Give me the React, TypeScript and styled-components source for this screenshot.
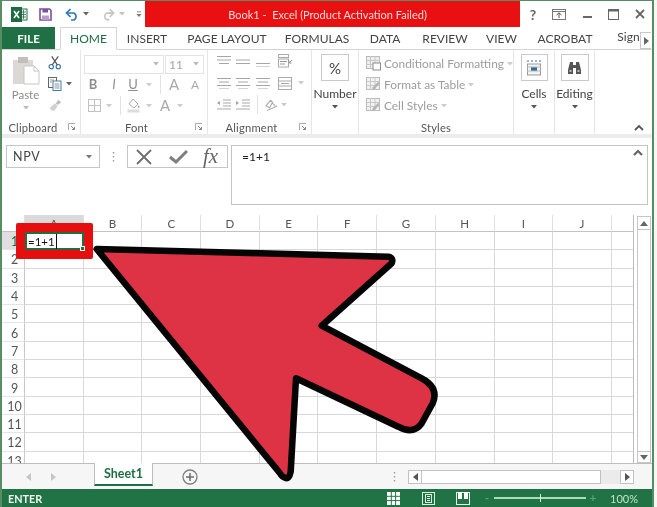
import React from "react";
import styled, { createGlobalStyle } from "styled-components";

const Global = createGlobalStyle`
  html, body { margin: 0; padding: 0; background: #fff; overflow: hidden; }
  * { box-sizing: border-box; }
`;

const Page = styled.div`
  position: relative;
  width: 657px;
  height: 507px;
  padding-right: 3px;
  background: #f4f7f4;
  overflow: hidden;
  font-family: "Lato", "Open Sans", "Liberation Sans", sans-serif;
  filter: blur(0.35px);
`;
const Win = styled.div`
  display: flex;
  flex-direction: column;
  width: 654px;
  height: 507px;
  background: #fff;
  border-left: 2px solid #578c64;
  border-right: 2px solid #578c64;
  border-top: 1px solid #578c64;
`;

/* Title bar */
const TitleBar = styled.div`
  display: flex;
  height: 26px;
  flex: none;
`;
const Qat = styled.div`
  display: flex;
  align-items: center;
  width: 143px;
  padding-left: 7px;
`;
const Slot = styled.div<{ $w: number; $ml?: number }>`
  display: flex;
  align-items: center;
  justify-content: center;
  flex: none;
  width: ${(p) => p.$w}px;
  margin-left: ${(p) => p.$ml ?? 0}px;
`;
const RedTitle = styled.div`
  width: 375px;
  display: flex;
  align-items: center;
  justify-content: center;
  padding-right: 10px;
  background: #e81010;
  color: #fbdcdc;
  font-size: 11px;
  white-space: pre;
`;
const WinControls = styled.div`
  display: flex;
  align-items: center;
  flex: 1;
`;
const Help = styled.span`
  color: #666;
  font-weight: 700;
  font-size: 14px;
`;

/* Tabs */
const TabRow = styled.div`
  display: flex;
  height: 23px;
  flex: none;
  align-items: stretch;
  border-bottom: 1px solid #d4d4d4;
`;
const FileTab = styled.div`
  width: 53px;
  background: #1f7044;
  color: #fff;
  font-size: 11.5px;
  font-weight: 700;
  display: flex;
  align-items: center;
  justify-content: center;
`;
const Tab = styled.div<{ $w: number; $ml: number; $active?: boolean }>`
  width: ${(p) => p.$w}px;
  margin-left: ${(p) => p.$ml}px;
  flex: none;
  display: flex;
  align-items: center;
  justify-content: center;
  font-size: 12px;
  color: ${(p) => (p.$active ? "#1f6e43" : "#444")};
  white-space: nowrap;
  background: #fff;
  border: ${(p) => (p.$active ? "1px solid #d4d4d4" : "none")};
  border-bottom: ${(p) => (p.$active ? "1px solid #fff" : "none")};
  height: ${(p) => (p.$active ? "23px" : "22px")};
`;
const SignWrap = styled.div`
  font-size: 12px;
  color: #444;
  line-height: 18px;
  margin-bottom: 3px;
`;
const MoreBtn = styled.div`
  width: 11px;
  height: 17px;
  margin-top: 5px;
  border: 1px solid #c8c8c8;
  border-right: none;
  display: flex;
  align-items: center;
  justify-content: center;
`;

/* Ribbon */
const Ribbon = styled.div`
  display: flex;
  height: 84px;
  flex: none;
`;
const Group = styled.div<{ $w: number }>`
  width: ${(p) => p.$w}px;
  flex: none;
  display: flex;
  flex-direction: column;
  border-right: 1px solid #e6e6e6;
  position: relative;
`;
const GroupBody = styled.div<{ $pt?: number }>`
  flex: 1;
  padding-top: ${(p) => p.$pt ?? 0}px;
  min-height: 0;
`;
const GroupLabel = styled.div<{ $pr?: number }>`
  height: 18px;
  padding: 4px ${(p) => p.$pr ?? 0}px 0 0;
  display: flex;
  align-items: center;
  justify-content: center;
  font-size: 11.2px;
  color: #555;
  letter-spacing: 0.2px;
`;
const Launcher = styled.div`
  position: absolute;
  right: 4px;
  bottom: 3px;
  display: flex;
`;
const ToolRow = styled.div<{ $h?: number }>`
  display: flex;
  align-items: center;
  height: ${(p) => p.$h ?? 21}px;
`;
const ClipWrap = styled.div`
  display: flex;
  height: 100%;
`;
const PasteCol = styled.div`
  width: 46px;
  display: flex;
  flex-direction: column;
  align-items: center;
  padding: 6px 0 0 1px;
`;
const PasteText = styled.div`
  font-size: 11.5px;
  color: #8c8c8c;
  margin-top: 2px;
  line-height: 16px;
`;
const ClipTools = styled.div`
  padding-top: 2px;
  width: 30px;
`;
const InputBox = styled.div<{ $w: number; $ml: number }>`
  width: ${(p) => p.$w}px;
  margin-left: ${(p) => p.$ml}px;
  height: 19px;
  border: 1px solid #e2e2e2;
  display: flex;
  align-items: center;
  justify-content: space-between;
  padding: 0 4px 0 3px;
  font-size: 12px;
  color: #a5a5a5;
  flex: none;
`;
const Glyph = styled.span<{ $size?: number; $bold?: boolean; $color?: string; $italic?: boolean; $u?: boolean }>`
  font-size: ${(p) => p.$size ?? 12}px;
  font-weight: ${(p) => (p.$bold ? 700 : 400)};
  font-style: ${(p) => (p.$italic ? "italic" : "normal")};
  text-decoration: ${(p) => (p.$u ? "underline" : "none")};
  color: ${(p) => p.$color ?? "#8e8e8e"};
  line-height: 1;
`;
const VLine = styled.div`
  width: 1px;
  height: 19px;
  background: #e2e2e2;
`;
const BigCol = styled.div`
  display: flex;
  flex-direction: column;
  align-items: center;
  padding-top: 4px;
`;
const BigBox = styled.div<{ $w: number }>`
  width: ${(p) => p.$w}px;
  height: 27px;
  border: 1px solid #c9c9c9;
  display: flex;
  align-items: center;
  justify-content: center;
  color: #444;
  font-size: 15px;
`;
const BigText = styled.div`
  font-size: 12px;
  color: #444;
  line-height: 16px;
  margin-top: 5px;
  white-space: nowrap;
`;
const BigCaret = styled.div`
  display: flex;
  margin-top: 3px;
`;
const StyleRow = styled.div`
  display: flex;
  align-items: center;
  height: 21px;
  padding-left: 7px;
  gap: 3px;
  font-size: 11.9px;
  color: #9d9d9d;
  white-space: nowrap;
`;
const RibbonEnd = styled.div`
  flex: 1;
  display: flex;
  align-items: flex-end;
  justify-content: flex-end;
  padding: 0 8px 3px 0;
`;
const Strip = styled.div`
  height: 4px;
  flex: none;
  background: #ececec;
`;

/* Formula bar */
const FormulaArea = styled.div`
  display: flex;
  height: 77px;
  flex: none;
  padding: 7px 4px 10px 4px;
  align-items: flex-start;
`;
const NameBox = styled.div`
  width: 94px;
  height: 23px;
  border: 1px solid #c6c6c6;
  display: flex;
  align-items: center;
  justify-content: space-between;
  padding: 0 7px 0 6px;
  font-size: 12.5px;
  letter-spacing: 0.6px;
  color: #444;
`;
const Dots = styled.div`
  width: 27px;
  height: 23px;
  display: flex;
  align-items: center;
  justify-content: center;
`;
const FxBox = styled.div`
  width: 101px;
  height: 23px;
  border: 1px solid #c6c6c6;
  display: flex;
  align-items: center;
  padding-left: 7px;
  gap: 15.5px;
`;
const Fx = styled.span`
  font-family: "Liberation Serif", serif;
  font-style: italic;
  font-size: 21px;
  color: #666;
  line-height: 1;
`;
const FormulaInput = styled.div`
  width: 417px;
  height: 60px;
  margin-left: 3px;
  border: 1px solid #c4c4c4;
  padding: 3px 4px 0 10px;
  font-size: 12px;
  color: #222;
  display: flex;
  justify-content: space-between;
  align-items: flex-start;
`;

/* Sheet */
const SheetArea = styled.div`
  display: flex;
  height: 248px;
  flex: none;
`;
const Grid = styled.div`
  width: 632px;
  height: 248px;
  display: grid;
  grid-template-columns: 23px repeat(10, 58.7px) 22px;
  grid-auto-rows: 18.3px;
  grid-template-rows: 17px;
  border-right: 1px solid #bdbdbd;
  overflow: hidden;
`;
const ColHead = styled.div<{ $on?: boolean }>`
  display: flex;
  align-items: center;
  justify-content: center;
  padding-top: 1px;
  font-size: 11.5px;
  color: #555;
  background: ${(p) => (p.$on ? "#dadada" : "#fff")};
  border-right: 1px solid #e0e0e0;
  border-bottom: 1px solid #c2c2c2;
`;
const RowHead = styled.div<{ $on?: boolean }>`
  display: flex;
  align-items: center;
  justify-content: center;
  padding: 2px 0 0 3px;
  font-size: 12.5px;
  color: ${(p) => (p.$on ? "#1f6e43" : "#555")};
  background: ${(p) => (p.$on ? "#dfdfdf" : "#fff")};
  border-right: 1px solid #c9c9c9;
  border-bottom: 1px solid #e4e4e4;
`;
const Cell = styled.div`
  border-right: 1px solid #d8d8d8;
  border-bottom: 1px solid #d8d8d8;
`;
const ActiveCell = styled.div`
  position: relative;
  z-index: 2;
  background: #fff;
  border: 2px solid #1f6e43;
  box-shadow: 0 0 0 9px #e60f0f;
  border-radius: 0.5px;
  display: flex;
  align-items: center;
  padding: 1px 0 0 1px;
  font-size: 11.5px;
  font-weight: 400;
  color: #111;
`;
const Caret = styled.span`
  display: inline-block;
  width: 1px;
  height: 15px;
  margin-left: 1px;
  background: #111;
`;
const Handle = styled.span`
  position: absolute;
  right: -3px;
  bottom: -3px;
  width: 5px;
  height: 5px;
  background: #1f6e43;
  border: 1px solid #fff;
`;
const VScroll = styled.div`
  width: 18px;
  padding: 1px 1px 0 3px;
  display: flex;
  flex-direction: column;
  height: 248px;
`;
const VBtn = styled.div<{ $h: number }>`
  height: ${(p) => p.$h}px;
  flex: none;
  border: 1px solid #c6c6c6;
  display: flex;
  align-items: center;
  justify-content: center;
`;
const VTrack = styled.div`
  flex: 1;
  border-left: 1px solid #c6c6c6;
  border-right: 1px solid #c6c6c6;
`;

/* Sheet bar */
const SheetBar = styled.div`
  height: 26px;
  flex: none;
  display: flex;
  align-items: flex-start;
  background: #f6f6f6;
  border-top: 1px solid #bdbdbd;
`;
const NavArrows = styled.div`
  width: 92px;
  height: 25px;
  padding-left: 24px;
  display: flex;
  align-items: center;
  gap: 20px;
`;
const SheetTab = styled.div`
  width: 59px;
  height: 23px;
  margin-top: -1px;
  background: #fff;
  border-left: 1px solid #bdbdbd;
  border-right: 1px solid #bdbdbd;
  border-bottom: 2px solid #1f6e43;
  color: #1f6e43;
  font-weight: 700;
  font-size: 12.5px;
  display: flex;
  align-items: center;
  justify-content: center;
`;
const AddWrap = styled.div`
  margin-left: 29px;
  height: 25px;
  width: 18px;
  display: flex;
  align-items: center;
`;
const SheetDots = styled.div`
  margin-left: 193px;
  height: 25px;
  width: 12px;
  display: flex;
  align-items: center;
`;
const HScroll = styled.div`
  margin: 6px 0 0 3px;
  width: 226px;
  height: 14px;
  display: flex;
`;
const HBtn = styled.div`
  width: 14px;
  flex: none;
  border: 1px solid #c2c2c2;
  background: #fff;
  display: flex;
  align-items: center;
  justify-content: center;
`;
const HThumb = styled.div`
  width: 179px;
  flex: none;
  background: #fff;
  border: 1px solid #c2c2c2;
  border-left: none;
`;
const HGap = styled.div`
  flex: 1;
  background: #ebebeb;
`;

/* Status */
const Status = styled.div`
  flex: 1;
  background: #217346;
  color: #f1f6f3;
  font-size: 10.8px;
  font-weight: 700;
  display: flex;
  align-items: center;
  padding-left: 6px;
`;
const StatusRight = styled.div`
  display: flex;
  align-items: center;
  margin-left: auto;
`;
const Zoom = styled.div`
  position: relative;
  width: 92px;
  height: 2px;
  margin: 0 3px 0 3px;
  background: #a9dcb9;
`;
const ZoomTick = styled.span`
  position: absolute;
  left: 46px;
  top: -3px;
  width: 1px;
  height: 8px;
  background: #d8f0e0;
`;
const PctText = styled.span`
  width: 25px;
  font-size: 11px;
  font-weight: 400;
  color: #bfe3cb;
  margin-left: 13px;
  margin-right: 17px;
  white-space: nowrap;
`;
const Pm = styled.span`
  color: #54a474;
  font-size: 12px;
  font-weight: 700;
  line-height: 1;
`;

/* Overlay arrow */
const ArrowSvg = styled.svg`
  position: absolute;
  left: 0;
  top: 0;
  z-index: 5;
  pointer-events: none;
`;

const Dn = ({ c = "#999" }: { c?: string }) => (
  <svg width="6" height="4" viewBox="0 0 6 4"><path d="M0 0h6L3 3.5z" fill={c} /></svg>
);
const ExcelLogo = () => (
  <svg width="17" height="15" viewBox="0 0 17 15">
    <rect x="8" y="2" width="8" height="11" fill="#fff" stroke="#1f6e43" />
    <path d="M10 5h5M10 7.5h5M10 10h5M12.5 3v9" stroke="#1f6e43" strokeWidth="0.8" />
    <rect x="0" y="0" width="11" height="15" fill="#1d6b40" />
    <path d="M3 4l5 7M8 4l-5 7" stroke="#fff" strokeWidth="1.6" />
  </svg>
);
const Save = () => (
  <svg width="13" height="13" viewBox="0 0 13 13">
    <path d="M1 1h9.5L12 2.5V12H1z" fill="#fff" stroke="#7d4f9e" strokeWidth="1.6" />
    <rect x="3.5" y="1" width="5.5" height="3.5" fill="#7d4f9e" />
    <rect x="3" y="7.5" width="7" height="4.5" fill="#b79ccb" />
  </svg>
);
const Undo = ({ c, flip }: { c: string; flip?: boolean }) => (
  <svg width="15" height="13" viewBox="0 0 15 13" style={flip ? { transform: "scaleX(-1)" } : undefined}>
    <path d="M2 5h7a4 4 0 0 1 0 7H6" fill="none" stroke={c} strokeWidth="1.7" />
    <path d="M5.5 1L1.5 5l4 4" fill="none" stroke={c} strokeWidth="1.7" />
  </svg>
);
const QatMore = () => (
  <svg width="7" height="8" viewBox="0 0 7 8"><path d="M1 1.5h5" stroke="#777" /><path d="M0.5 4h6L3.5 7.5z" fill="#777" /></svg>
);
const DisplayIcon = () => (
  <svg width="14" height="12" viewBox="0 0 14 12"><rect x="0.5" y="1.5" width="13" height="10" fill="none" stroke="#777" /><path d="M0.5 3.5h13" stroke="#777" /><path d="M7 5v5M4.5 7L7 4.8 9.5 7" fill="none" stroke="#555" /></svg>
);
const Lines = ({ w }: { w: number[] }) => (
  <svg width="14" height="12" viewBox="0 0 14 12">
    {w.map((x, i) => (
      <path key={i} d={`M${(14 - x) / 2} ${1.5 + i * 3.5}h${x}`} stroke="#a6a6a6" strokeWidth="1" />
    ))}
  </svg>
);
const Launch = () => (
  <svg width="8" height="8" viewBox="0 0 8 8"><path d="M0.5 7V0.5H7" fill="none" stroke="#aaa" /><path d="M3 3l3.5 3.5M6.5 4v2.5H4" fill="none" stroke="#888" /></svg>
);
const PasteIcon = () => (
  <svg width="28" height="29" viewBox="0 0 28 29">
    <rect x="1" y="4" width="20" height="24" fill="#dcd8d5" />
    <rect x="6" y="1" width="10" height="6" fill="#c2bebb" />
    <path d="M12 10h10l5 5v13H12z" fill="#fff" stroke="#c6c6c6" />
    <path d="M22 10v5h5" fill="none" stroke="#c6c6c6" />
  </svg>
);
const Scissors = () => (
  <svg width="15" height="15" viewBox="0 0 15 15">
    <circle cx="3.5" cy="12" r="2.3" fill="none" stroke="#2e6f9f" strokeWidth="1.2" />
    <circle cx="11" cy="12" r="2.3" fill="none" stroke="#2e6f9f" strokeWidth="1.2" />
    <path d="M4.5 10L11 1M10 10L4 1" stroke="#555" strokeWidth="1.3" />
  </svg>
);
const CopyIcon = () => (
  <svg width="14" height="14" viewBox="0 0 14 14">
    <rect x="0.5" y="0.5" width="8" height="10" fill="#fff" stroke="#666" />
    <rect x="5" y="4" width="8" height="9.5" fill="#fff" stroke="#3d7eb0" />
    <path d="M2 3h4M2 5h2M6.5 7h5M6.5 9h5M6.5 11h5" stroke="#777" strokeWidth="0.8" />
  </svg>
);
const Brush = () => (
  <svg width="16" height="14" viewBox="0 0 16 14">
    <path d="M9 5l3-4 3 3-4 3z" fill="#bdbdbd" />
    <path d="M2 10l6-5 3 3-4 6-2-1-1 .5z" fill="#d4d0cc" />
  </svg>
);
const BorderIcon = () => (
  <svg width="13" height="13" viewBox="0 0 13 13"><rect x="0.5" y="0.5" width="12" height="12" fill="none" stroke="#c2c2c2" /><path d="M6.5 0v13M0 6.5h13" stroke="#c2c2c2" /></svg>
);
const FillIcon = () => (
  <svg width="14" height="15" viewBox="0 0 14 15">
    <path d="M6 1l5 5-4 4-5-4z" fill="#fff" stroke="#aaa" />
    <path d="M11.5 7c1 1.5 1.5 2.5.5 3s-1.5-1-.5-3z" fill="#aaa" />
    <rect x="0.5" y="11.5" width="12" height="3" fill="#dcdcdc" />
  </svg>
);
const Wrap = () => (
  <svg width="15" height="14" viewBox="0 0 15 14">
    <rect x="0.5" y="0.5" width="10" height="3" fill="none" stroke="#aaa" />
    <rect x="0.5" y="5" width="10" height="8" fill="none" stroke="#aaa" />
    <path d="M2 7.5h7M2 10h5M14 6l-3 3M11 6.5V9h2.5" fill="none" stroke="#999" />
  </svg>
);
const Merge = () => (
  <svg width="14" height="13" viewBox="0 0 14 13">
    <rect x="0.5" y="0.5" width="13" height="12" fill="none" stroke="#aaa" />
    <path d="M0 4h14M0 9h14M3 6.5h8" stroke="#aaa" />
  </svg>
);
const Indent = ({ right }: { right?: boolean }) => (
  <svg width="14" height="11" viewBox="0 0 14 11">
    <path d="M6 1h8M6 4h8M6 7h8M0 10h14" stroke="#a8a8a8" />
    <path d={right ? "M0 2v4l3-2z" : "M3 2v4L0 4z"} fill="#8ab" />
  </svg>
);
const Orient = () => (
  <svg width="15" height="14" viewBox="0 0 15 14">
    <path d="M1 8l5-6 2 2-3 6zM8 5l3 3M2 13L13 8" fill="none" stroke="#a8a8a8" strokeWidth="1.1" />
  </svg>
);
const StyleIcon = ({ kind }: { kind: number }) => (
  <svg width="15" height="15" viewBox="0 0 15 15">
    <rect x="0.5" y="0.5" width="13" height="12" fill={kind === 0 ? "#eee" : "#f2f2f2"} stroke="#bbb" />
    <path d="M0 4.5h14M0 8.5h14M4.5 0v13M9 0v13" stroke="#c8c8c8" />
    {kind === 0 ? (
      <rect x="7" y="7" width="7.5" height="7" fill="#fff" stroke="#8a8a8a" />
    ) : (
      <path d="M8 13l6-7-2-1-6 6z" fill="#b4b4b4" />
    )}
  </svg>
);
const CellsIcon = () => (
  <svg width="16" height="16" viewBox="0 0 16 16">
    <path d="M1 1h2M5 1h2M9 1h2M13 1h2" stroke="#2e6f9f" strokeWidth="1.2" />
    <rect x="1.5" y="4" width="13" height="11" fill="#f4f4f4" stroke="#999" />
    <rect x="5" y="7" width="6" height="4" fill="#2e6f9f" />
    <path d="M1 7h14M1 11h14" stroke="#bbb" />
  </svg>
);
const Binoc = () => (
  <svg width="15" height="14" viewBox="0 0 15 14">
    <path d="M3 1h3v3h3V1h3l2 8v4H9V7H6v6H1V9z" fill="#555" />
    <path d="M2.5 9h2v2h-2zM10.5 9h2v2h-2z" fill="#bbb" />
  </svg>
);
const ChevUp = ({ c = "#555", w = 1.8 }: { c?: string; w?: number }) => (
  <svg width="10" height="7" viewBox="0 0 10 7"><path d="M1 6l4-4 4 4" fill="none" stroke={c} strokeWidth={w} /></svg>
);
const BigX = () => (
  <svg width="18" height="16" viewBox="0 0 18 16"><path d="M2 1l14 14M16 1L2 15" stroke="#6e6e6e" strokeWidth="1.8" /></svg>
);
const Check = () => (
  <svg width="19" height="15" viewBox="0 0 19 15"><path d="M1 8l6 5L18 2" fill="none" stroke="#7e7e7e" strokeWidth="3" /></svg>
);
const DotsV = () => (
  <svg width="3" height="10" viewBox="0 0 3 10"><path d="M1.5 0v1.6M1.5 4v1.6M1.5 8v1.6" stroke="#999" strokeWidth="1.4" /></svg>
);
const Tri = ({ dir, c = "#c6c6c6" }: { dir: "l" | "r" | "u" | "d"; c?: string }) => {
  const d = { l: "M5 0v8L0 4z", r: "M0 0v8l5-4z", u: "M0 5h8L4 0z", d: "M0 0h8L4 5z" }[dir];
  return <svg width={dir === "l" || dir === "r" ? 5 : 8} height={dir === "l" || dir === "r" ? 8 : 5}><path d={d} fill={c} /></svg>;
};
const Plus = () => (
  <svg width="16" height="16" viewBox="0 0 16 16"><circle cx="8" cy="8" r="7" fill="none" stroke="#7e7e7e" strokeWidth="1.3" /><path d="M8 4v8M4 8h8" stroke="#6e6e6e" strokeWidth="1.5" /></svg>
);
const ViewGrid = () => (
  <svg width="13" height="13" viewBox="0 0 13 13"><rect width="13" height="13" fill="#fff" /><path d="M4.3 0v13M8.6 0v13M0 4.3h13M0 8.6h13" stroke="#217346" /></svg>
);
const ViewPage = () => (
  <svg width="13" height="13" viewBox="0 0 13 13"><rect x="0.5" y="0.5" width="12" height="12" fill="none" stroke="#d8ecdf" /><rect x="3.5" y="2.5" width="6" height="8" fill="none" stroke="#d8ecdf" /><path d="M5 4.5h3M5 6.5h3M5 8.5h3" stroke="#d8ecdf" /></svg>
);
const ViewBreak = () => (
  <svg width="14" height="13" viewBox="0 0 14 13"><rect x="0.5" y="0.5" width="13" height="12" fill="none" stroke="#e4f2e9" /><rect x="2" y="0" width="4" height="7" fill="#fff" /><rect x="8" y="0" width="4" height="7" fill="#fff" /></svg>
);

const columns = ["A", "B", "C", "D", "E", "F", "G", "H", "I", "J", ""];
const rows = Array.from({ length: 13 }, (_, i) => i + 1);
const tabs: [string, number, number][] = [
  ["INSERT", 34, 13],
  ["PAGE LAYOUT", 70, 28],
  ["FORMULAS", 56, 27],
  ["DATA", 28, 26],
  ["REVIEW", 36, 28],
  ["VIEW", 23, 27],
  ["ACROBAT", 48, 28],
];
const ARROW =
  "M96.7 249L388.3 256.7Q394 258 391.7 263.3L321.7 325.7L421.7 378.3Q439.3 387.7 432.7 403.3L421.7 423.3Q413.3 435 398.3 426.7L296 378.3L290.7 471.7Q289 480 285 477.7Q282 477 280 473.3Z";

export default function App() {
  return (
    <Page>
      <Global />
      <Win>
        <TitleBar>
          <Qat>
            <Slot $w={20}><ExcelLogo /></Slot>
            <Slot $w={32}><Save /></Slot>
            <Slot $w={22}><Undo c="#2f78b5" /></Slot>
            <Slot $w={6}><Dn c="#666" /></Slot>
            <Slot $w={14} $ml={12}><Undo c="#c4c4c4" flip /></Slot>
            <Slot $w={6} $ml={4}><Dn c="#c4c4c4" /></Slot>
            <Slot $w={6} $ml={11}><QatMore /></Slot>
          </Qat>
          <RedTitle>{"Book1 -  Excel (Product Activation Failed)"}</RedTitle>
          <WinControls>
            <Slot $w={14} $ml={6}><Help>?</Help></Slot>
            <Slot $w={14} $ml={12}><DisplayIcon /></Slot>
            <Slot $w={14} $ml={14}>
              <svg width="9" height="8" viewBox="0 0 9 8"><path d="M0 7h9" stroke="#666" strokeWidth="2" /></svg>
            </Slot>
            <Slot $w={14} $ml={12}>
              <svg width="11" height="11" viewBox="0 0 11 11"><rect x="0.5" y="0.5" width="10" height="10" fill="none" stroke="#666" /><path d="M0 1.5h11" stroke="#666" strokeWidth="2" /></svg>
            </Slot>
            <Slot $w={14} $ml={13}>
              <svg width="10" height="10" viewBox="0 0 10 10"><path d="M1 1l8 8M9 1l-8 8" stroke="#666" strokeWidth="1.8" /></svg>
            </Slot>
          </WinControls>
        </TitleBar>

        <TabRow>
          <FileTab>FILE</FileTab>
          <Tab $w={57} $ml={5} $active>HOME</Tab>
          {tabs.map(([t, w, ml]) => (
            <Tab key={t} $w={w} $ml={ml}>{t}</Tab>
          ))}
          <Tab $w={23} $ml={28}><SignWrap>Sign</SignWrap></Tab>
          <MoreBtn><Tri dir="r" c="#666" /></MoreBtn>
        </TabRow>

        <Ribbon>
          <Group $w={79}>
            <GroupBody>
              <ClipWrap>
                <PasteCol>
                  <PasteIcon />
                  <PasteText>Paste</PasteText>
                  <BigCaret><Dn c="#bbb" /></BigCaret>
                </PasteCol>
                <ClipTools>
                  <ToolRow><Slot $w={14}><Scissors /></Slot></ToolRow>
                  <ToolRow><Slot $w={14}><CopyIcon /></Slot><Slot $w={6} $ml={4}><Dn c="#666" /></Slot></ToolRow>
                  <ToolRow><Slot $w={14}><Brush /></Slot></ToolRow>
                </ClipTools>
              </ClipWrap>
            </GroupBody>
            <GroupLabel $pr={16}>Clipboard</GroupLabel>
            <Launcher><Launch /></Launcher>
          </Group>

          <Group $w={127}>
            <GroupBody $pt={4}>
              <ToolRow $h={20}>
                <InputBox $w={80} $ml={3}><span /><Dn c="#bbb" /></InputBox>
                <InputBox $w={39} $ml={1}>11<Dn c="#bbb" /></InputBox>
              </ToolRow>
              <ToolRow>
                <Slot $w={14} $ml={5}><Glyph $size={13} $bold>B</Glyph></Slot>
                <Slot $w={14} $ml={7}><Glyph $size={13} $italic>I</Glyph></Slot>
                <Slot $w={14} $ml={5}><Glyph $size={13} $u>U</Glyph></Slot>
                <Slot $w={6} $ml={6}><Dn c="#ccc" /></Slot>
                <Slot $w={1} $ml={8}><VLine /></Slot>
                <Slot $w={14} $ml={6}><Glyph $size={15} $color="#aaa">A</Glyph></Slot>
                <Slot $w={14} $ml={7}><Glyph $size={12} $color="#aaa">A</Glyph></Slot>
              </ToolRow>
              <ToolRow>
                <Slot $w={14} $ml={6}><BorderIcon /></Slot>
                <Slot $w={6} $ml={5}><Dn c="#ccc" /></Slot>
                <Slot $w={1} $ml={8}><VLine /></Slot>
                <Slot $w={14} $ml={6}><FillIcon /></Slot>
                <Slot $w={6} $ml={5}><Dn c="#ccc" /></Slot>
                <Slot $w={14} $ml={6}><Glyph $size={15} $color="#aaa">A</Glyph></Slot>
                <Slot $w={6} $ml={5}><Dn c="#ccc" /></Slot>
              </ToolRow>
            </GroupBody>
            <GroupLabel $pr={15}>Font</GroupLabel>
            <Launcher><Launch /></Launcher>
          </Group>

          <Group $w={104}>
            <GroupBody $pt={0}>
              <ToolRow $h={22}>
                <Slot $w={14} $ml={9}><Lines w={[14, 14, 10]} /></Slot>
                <Slot $w={14} $ml={5}><Lines w={[0, 14, 14]} /></Slot>
                <Slot $w={14} $ml={6}><Lines w={[0, 0, 14, 14]} /></Slot>
                <Slot $w={15} $ml={8}><Wrap /></Slot>
              </ToolRow>
              <ToolRow $h={22}>
                <Slot $w={14} $ml={9}><Lines w={[14, 10, 14, 10]} /></Slot>
                <Slot $w={14} $ml={5}><Lines w={[14, 10, 14, 10]} /></Slot>
                <Slot $w={14} $ml={6}><Lines w={[14, 10, 14, 10]} /></Slot>
                <Slot $w={14} $ml={8}><Merge /></Slot>
                <Slot $w={6} $ml={6}><Dn c="#ccc" /></Slot>
              </ToolRow>
              <ToolRow>
                <Slot $w={14} $ml={9}><Indent /></Slot>
                <Slot $w={14} $ml={5}><Indent right /></Slot>
                <Slot $w={1} $ml={7}><VLine /></Slot>
                <Slot $w={14} $ml={7}><Orient /></Slot>
                <Slot $w={6} $ml={2}><Dn c="#ccc" /></Slot>
              </ToolRow>
            </GroupBody>
            <GroupLabel $pr={16}>Alignment</GroupLabel>
            <Launcher><Launch /></Launcher>
          </Group>

          <Group $w={47}>
            <BigCol>
              <BigBox $w={28}>%</BigBox>
              <BigText>Number</BigText>
              <BigCaret><Dn c="#555" /></BigCaret>
            </BigCol>
          </Group>

          <Group $w={155}>
            <GroupBody $pt={3}>
              <StyleRow><StyleIcon kind={0} />Conditional Formatting <Dn c="#ccc" /></StyleRow>
              <StyleRow><StyleIcon kind={1} />Format as Table <Dn c="#ccc" /></StyleRow>
              <StyleRow><StyleIcon kind={1} />Cell Styles <Dn c="#ccc" /></StyleRow>
            </GroupBody>
            <GroupLabel>Styles</GroupLabel>
          </Group>

          <Group $w={41}>
            <BigCol>
              <BigBox $w={27}><CellsIcon /></BigBox>
              <BigText>Cells</BigText>
              <BigCaret><Dn c="#555" /></BigCaret>
            </BigCol>
          </Group>

          <Group $w={40}>
            <BigCol>
              <BigBox $w={28}><Binoc /></BigBox>
              <BigText>Editing</BigText>
              <BigCaret><Dn c="#555" /></BigCaret>
            </BigCol>
          </Group>

          <RibbonEnd><ChevUp /></RibbonEnd>
        </Ribbon>
        <Strip />

        <FormulaArea>
          <NameBox>NPV<Dn c="#777" /></NameBox>
          <Dots><DotsV /></Dots>
          <FxBox>
            <BigX />
            <Check />
            <Fx>fx</Fx>
          </FxBox>
          <FormulaInput>
            <span>=1+1</span>
            <ChevUp c="#666" w={2.2} />
          </FormulaInput>
        </FormulaArea>

        <SheetArea>
          <Grid>
            <ColHead />
            {columns.map((c, i) => (
              <ColHead key={i} $on={c === "A"}>{c}</ColHead>
            ))}
            {rows.map((r) => (
              <React.Fragment key={r}>
                <RowHead $on={r === 1}>{r}</RowHead>
                {columns.map((c, i) =>
                  r === 1 && c === "A" ? (
                    <ActiveCell key={i}>
                      =1+1<Caret />
                      <Handle />
                    </ActiveCell>
                  ) : (
                    <Cell key={i} />
                  )
                )}
              </React.Fragment>
            ))}
          </Grid>
          <VScroll>
            <VBtn $h={14}><Tri dir="u" c="#666" /></VBtn>
            <VTrack />
            <VBtn $h={12}><Tri dir="d" c="#666" /></VBtn>
          </VScroll>
        </SheetArea>

        <SheetBar>
          <NavArrows>
            <Tri dir="l" />
            <Tri dir="r" />
          </NavArrows>
          <SheetTab>Sheet1</SheetTab>
          <AddWrap><Plus /></AddWrap>
          <SheetDots><DotsV /></SheetDots>
          <HScroll>
            <HBtn><Tri dir="l" c="#555" /></HBtn>
            <HThumb />
            <HGap />
            <HBtn><Tri dir="r" c="#555" /></HBtn>
          </HScroll>
        </SheetBar>

        <Status>
          ENTER
          <StatusRight>
            <Slot $w={13}><ViewGrid /></Slot>
            <Slot $w={13} $ml={22}><ViewPage /></Slot>
            <Slot $w={14} $ml={21}><ViewBreak /></Slot>
            <Slot $w={8} $ml={13}><Pm>-</Pm></Slot>
            <Zoom><ZoomTick /></Zoom>
            <Slot $w={8}><Pm>+</Pm></Slot>
            <PctText>100%</PctText>
          </StatusRight>
        </Status>
      </Win>
      <ArrowSvg width="657" height="507" viewBox="0 0 657 507">
        <path d={ARROW} fill="#de3345" stroke="#050505" strokeWidth="6.5" strokeLinejoin="round" />
      </ArrowSvg>
    </Page>
  );
}
